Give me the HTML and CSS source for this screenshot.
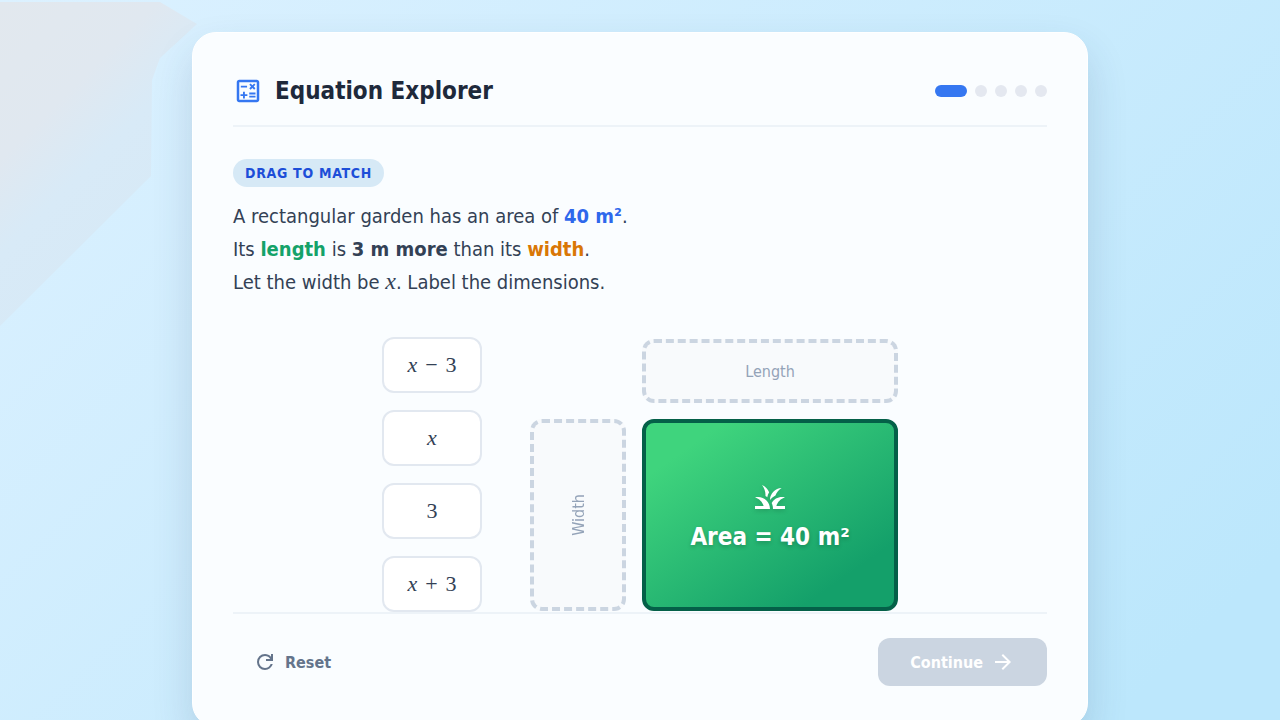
FILE: index.html
```html
<!DOCTYPE html>
<html lang="en">
<head>
<meta charset="utf-8">
<meta name="viewport" content="width=device-width, initial-scale=1">
<title>Equation Explorer</title>
<link rel="stylesheet" href="styles.css">
</head>
<body>
<main class="card">
  <header class="header">
    <div class="brand">
      <svg class="brand-icon" viewBox="0 0 24 24" aria-hidden="true"><path d="M19 3H5c-1.1 0-2 .9-2 2v14c0 1.1.9 2 2 2h14c1.1 0 2-.9 2-2V5c0-1.1-.9-2-2-2zm0 16H5V5h14v14z"/><path d="M6.25 7.72h5v1.5h-5zM13 15.75h5v1.5h-5zM13 13.25h5v1.5h-5zM8 18h1.5v-2h2v-1.5h-2v-2H8v2H6V16h2zM14.09 10.95l1.41-1.41 1.41 1.41 1.06-1.06-1.41-1.42 1.41-1.41L16.91 6 15.5 7.41 14.09 6l-1.06 1.06 1.41 1.41-1.41 1.42z"/></svg>
      <h1 class="title">Equation Explorer</h1>
    </div>
    <div class="steps" role="img" aria-label="Step 1 of 5">
      <span class="step step-active"></span><span class="step"></span><span class="step"></span><span class="step"></span><span class="step"></span>
    </div>
  </header>

  <section class="problem">
    <span class="tag">DRAG TO MATCH</span>
    <p class="prompt">A rectangular garden has an area of <strong class="blue">40 m²</strong>.<br>
      Its <strong class="green">length</strong> is <strong>3 m more</strong> than its <strong class="amber">width</strong>.<br>
      Let the width be <i class="var">x</i>. Label the dimensions.</p>
  </section>

  <section class="workspace">
    <div class="chips">
      <button type="button" class="chip"><i>x</i><span>−</span><span>3</span></button>
      <button type="button" class="chip"><i>x</i></button>
      <button type="button" class="chip">3</button>
      <button type="button" class="chip"><i>x</i><span>+</span><span>3</span></button>
    </div>
    <div class="garden">
      <div class="drop drop-length">Length</div>
      <div class="drop drop-width"><span class="sideways">Width</span></div>
      <div class="area">
        <svg class="area-icon" viewBox="0 0 24 24" aria-hidden="true"><path d="M12 20H2v-2h5.75C7.02 15.19 4.81 12.99 2 12.26 2.64 12.1 3.31 12 4 12c4.42 0 8 3.58 8 8zM22 12.26C21.36 12.1 20.69 12 20 12c-2.93 0-5.48 1.58-6.88 3.93.29.66.53 1.35.67 2.07.13.65.2 1.32.2 2H22v-2h-5.75c.73-2.81 2.94-5.01 5.75-5.74zM15.64 11.02c.78-2.09 2.23-3.84 4.09-5C15.44 6.16 12 9.67 12 14v.02c.95-1.27 2.2-2.3 3.64-3zM11.42 8.85C10.58 6.66 8.88 4.89 6.7 4 8.14 5.86 9 8.18 9 10.71c0 .21-.03.41-.04.61.43.24.83.52 1.22.82.21-1.18.65-2.29 1.24-3.29z"/></svg>
        <span>Area = 40 m²</span>
      </div>
    </div>
  </section>

  <footer class="footer">
    <button type="button" class="btn btn-reset">
      <svg class="btn-icon" viewBox="0 0 24 24" aria-hidden="true"><path d="M12 20q-3.35 0-5.675-2.325T4 12t2.325-5.675T12 4q1.725 0 3.3.713T18 6.75V4h2v7h-7V9h4.2q-.8-1.4-2.188-2.2T12 6Q9.5 6 7.75 7.75T6 12t1.75 4.25T12 18q1.925 0 3.475-1.1T17.65 14h2.1q-.7 2.65-2.85 4.325T12 20z"/></svg>
      Reset
    </button>
    <button type="button" class="btn btn-continue" disabled>
      Continue
      <svg class="btn-icon" viewBox="0 0 24 24" aria-hidden="true"><path d="M12 4l-1.41 1.41L16.17 11H4v2h12.17l-5.58 5.59L12 20l8-8z"/></svg>
    </button>
  </footer>
</main>
</body>
</html>
```
FILE: styles.css
```css
*, *::before, *::after { box-sizing: border-box; }

body {
  position: relative;
  min-height: 100vh;
  margin: 0;
  padding: 32px;
  font-family: "DejaVu Sans Condensed", Tahoma, "Noto Sans", sans-serif;
  font-size: 16px;
  color: #334155;
  background: linear-gradient(135deg, #dcf1ff 0%, #bce7fc 90%);
}

/* Soft grey facet behind the card's upper left corner */
body::before {
  content: "";
  position: absolute;
  top: 2px;
  left: 0;
  z-index: -1;
  width: 200px;
  height: 326px;
  background: linear-gradient(135deg, #e2e8ee 0%, #e0e8f0 30%, #d8eaf7 48%, #d5e8f5 100%);
  clip-path: polygon(0 0, 160px 0, 197px 22px, 160px 56px, 152px 78px, 151px 174px, 0 324px);
}

.card {
  max-width: 896px;
  margin: 0 auto;
  padding: 40px;
  border: 1px solid #fff;
  border-radius: 24px;
  background: #fafdff;
  box-shadow: 0 20px 40px rgba(30, 64, 100, 0.16);
}

.header {
  display: flex;
  align-items: center;
  justify-content: space-between;
  padding-bottom: 16px;
  border-bottom: 2px solid #edf3f8;
}

.brand { display: flex; align-items: center; gap: 12px; }
.brand-icon { width: 30px; height: 30px; fill: #3577f1; }
.title { margin: 0; font-size: 24px; line-height: 36px; font-weight: 700; color: #1e293b; }

.steps { display: flex; gap: 8px; }
.step { width: 12px; height: 12px; border-radius: 6px; background: #e4e8f0; }
.step-active { width: 32px; background: #3577f1; }

.problem { padding-top: 32px; }
.tag {
  display: block;
  width: fit-content;
  padding: 0 12px;
  border-radius: 14px;
  background: #d6e9f6;
  color: #1d4ed8;
  font-size: 14px;
  line-height: 28px;
  font-weight: 700;
  letter-spacing: 0.05em;
}
.prompt { margin: 13px 0 0; font-size: 20px; line-height: 33px; }
.blue { color: #2e68ec; }
.green { color: #14a269; }
.amber { color: #d97706; }
.var { font-family: "Liberation Serif", serif; font-size: 24px; line-height: 24px; }

.workspace {
  display: flex;
  justify-content: center;
  align-items: flex-start;
  gap: 48px;
  margin-top: 38px;
}

.chips { display: flex; flex-direction: column; gap: 17px; }
.chip {
  display: flex;
  align-items: center;
  justify-content: center;
  gap: 8px;
  width: 100px;
  height: 56px;
  padding: 0;
  border: 2px solid #e2e8f0;
  border-radius: 12px;
  background: #fff;
  color: #334155;
  font-family: "Liberation Serif", serif;
  font-size: 22px;
  cursor: grab;
}

.garden {
  display: grid;
  grid-template-columns: 96px 256px;
  grid-template-rows: 64px 192px;
  gap: 16px;
  padding-top: 2px;
}
.drop {
  display: flex;
  align-items: center;
  justify-content: center;
  border: 4px dashed #cbd5e1;
  border-radius: 12px;
  background: #f8fafc;
  color: #94a3b8;
}
.drop-length { grid-column: 2; }
.sideways { writing-mode: vertical-rl; transform: rotate(180deg); }
.area {
  display: flex;
  flex-direction: column;
  align-items: center;
  justify-content: center;
  gap: 4px;
  padding-top: 4px;
  border: 4px solid #046048;
  border-radius: 12px;
  background: linear-gradient(145deg, #3fd47d 15%, #14a06a 82%);
  color: #fff;
  font-size: 24px;
  line-height: 36px;
  font-weight: 700;
  text-shadow: 0 2px 4px rgba(0, 0, 0, 0.2);
}
.area-icon { width: 36px; height: 36px; fill: #fff; filter: drop-shadow(0 2px 2px rgba(0, 0, 0, 0.15)); }

.footer {
  display: flex;
  align-items: center;
  justify-content: space-between;
  padding-top: 24px;
  border-top: 2px solid #edf3f8;
}
.btn {
  display: flex;
  align-items: center;
  gap: 8px;
  height: 48px;
  border: 0;
  border-radius: 12px;
  font: inherit;
  font-weight: 700;
}
.btn-icon { width: 24px; height: 24px; fill: currentColor; }
.btn-reset { padding: 0 20px; background: transparent; color: #64748b; }
.btn-continue { padding: 0 32px; background: #cbd5e1; color: #fff; }
```
